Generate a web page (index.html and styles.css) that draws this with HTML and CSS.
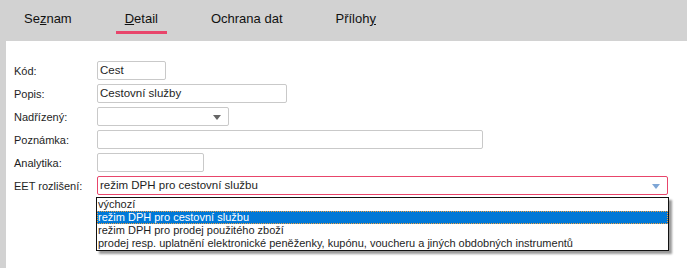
FILE: index.html
```html
<!DOCTYPE html>
<html lang="cs">
<head>
    <meta charset="UTF-8">
    <title>Detail</title>
    <link rel="stylesheet" href="styles.css">
</head>
<body>
    <div class="tabs">
        <a class="tab">Se<u>z</u>nam</a>
        <a class="tab active"><u>D</u>etail</a>
        <a class="tab">Ochrana dat</a>
        <a class="tab">Příloh<u>y</u></a>
    </div>
    <div class="panel">
        <div class="form">
            <label>Kód:</label>
            <div class="field w-kod">Cest</div>

            <label>Popis:</label>
            <div class="field w-popis">Cestovní služby</div>

            <label>Nadřízený:</label>
            <div class="field select w-nadr"><span class="arrow"></span></div>

            <label>Poznámka:</label>
            <div class="field w-pozn"></div>

            <label>Analytika:</label>
            <div class="field w-anal"></div>

            <label>EET rozlišení:</label>
            <div class="eet-wrap">
                <div class="field select focus w-eet">režim DPH pro cestovní službu<span class="arrow blue"></span></div>
                <ul class="dropdown">
                    <li>výchozí</li>
                    <li class="selected">režim DPH pro cestovní službu</li>
                    <li>režim DPH pro prodej použitého zboží</li>
                    <li>prodej resp. uplatnění elektronické peněženky, kupónu, voucheru a jiných obdobných instrumentů</li>
                </ul>
            </div>
        </div>
    </div>
</body>
</html>
```
FILE: styles.css
```css
body {
    margin: 0;
    padding: 0;
    background: #d2d2d2;
    font-family: 'Liberation Sans', Arial, sans-serif;
    color: #1e1e1e;
    height: 268px;
    display: flex;
    flex-direction: column;
}

.tabs {
    display: flex;
    gap: 35px;
    padding-left: 15px;
    height: 41px;
    box-sizing: border-box;
}

.tab {
    font-size: 13px;
    padding: 11px 9px 0 9px;
    height: 30px;
    box-sizing: border-box;
    color: #111;
}

.tab.active {
    border-bottom: 3px solid #e8456b;
    height: 34px;
}

.panel {
    flex: 1;
    background: #fff;
    margin-left: 6px;
    padding: 20px 0 0 8px;
}

.form {
    display: grid;
    grid-template-columns: 83px 1fr;
    grid-auto-rows: 19px;
    row-gap: 4px;
    font-size: 11px;
}

.form label {
    display: flex;
    align-items: center;
    padding-top: 1px;
}

.field {
    box-sizing: border-box;
    height: 19px;
    border: 1px solid #c9c9c9;
    border-radius: 2px;
    padding: 0 3px 0 2px;
    line-height: 17px;
    position: relative;
    font-size: 11.5px;
}

.w-kod { width: 69px; }
.w-popis { width: 190px; }
.w-nadr { width: 132px; }
.w-pozn { width: 386px; }
.w-anal { width: 107px; }
.w-eet { width: 571px; }

.field.focus {
    border-color: #e8456b;
}

.arrow {
    position: absolute;
    right: 7px;
    top: 7px;
    border-left: 4px solid transparent;
    border-right: 4px solid transparent;
    border-top: 5px solid #666;
}

.arrow.blue {
    border-top-color: #7ea6d6;
}

.eet-wrap {
    position: relative;
}

.dropdown {
    position: absolute;
    top: 21px;
    left: -1px;
    width: 571px;
    margin: 0;
    padding: 0;
    list-style: none;
    background: #fff;
    border: 1px solid #111;
    box-shadow: 3px 3px 2px rgba(0, 0, 0, 0.4);
    font-size: 11px;
    z-index: 2;
}

.dropdown li {
    height: 13px;
    line-height: 13px;
    padding-left: 1px;
    box-sizing: border-box;
    white-space: nowrap;
}

.dropdown li.selected {
    background: #0078d7;
    color: #fff;
    outline: 1px dotted #f0a040;
    outline-offset: -1px;
}
```
